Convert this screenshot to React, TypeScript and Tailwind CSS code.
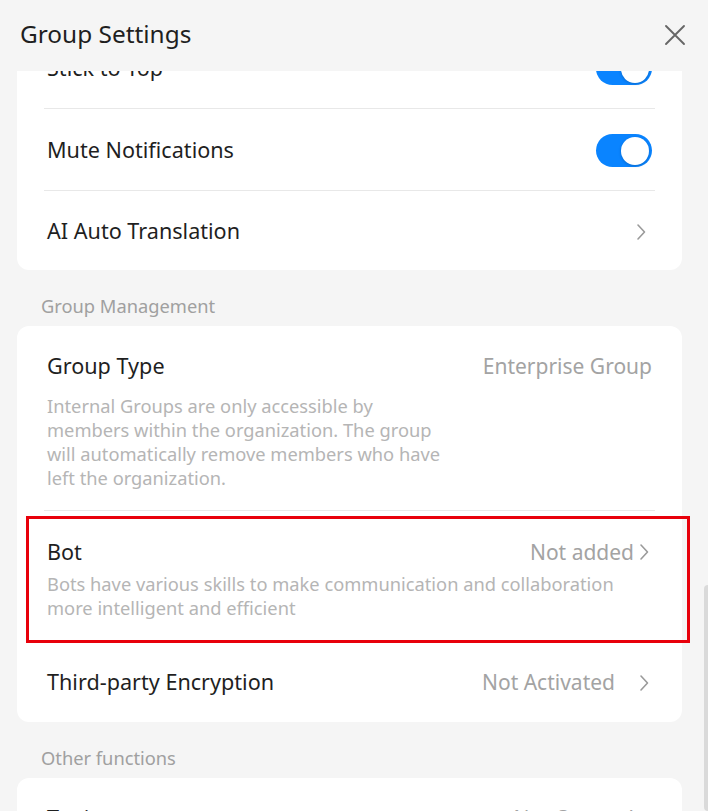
import React from "react";

const font = { fontFamily: '"Noto Sans", "Liberation Sans", sans-serif' };

function Chevron() {
  return (
    <svg width="10" height="18" viewBox="0 0 10 18" className="shrink-0">
      <polyline points="2,2 8.5,9 2,16" fill="none" stroke="#9a9a9a" strokeWidth="1.6" strokeLinecap="round" strokeLinejoin="round" />
    </svg>
  );
}

function Toggle() {
  return (
    <div className="w-[56px] h-[33px] rounded-full bg-[#0a84ff] relative shrink-0">
      <div className="absolute right-[3px] top-[2.5px] w-[28px] h-[28px] rounded-full bg-white shadow-[0_1px_3px_rgba(0,0,0,0.2)]" />
    </div>
  );
}

function Divider() {
  return <div className="mx-[27px] h-px bg-[#e8e8e8]" />;
}

function Row({ title, h, pr, children }: { title: string; h: string; pr: string; children?: React.ReactNode }) {
  return (
    <div className={`${h} ${pr} pl-[30px] pt-[2px] flex items-center justify-between`}>
      <span className="text-[21.6px] text-[#1f1f1f]">{title}</span>
      <div className="flex items-center gap-[14px]">{children}</div>
    </div>
  );
}

function SectionLabel({ text }: { text: string }) {
  return <div className="px-[41px] mt-[24px] mb-[8px] text-[18.3px] leading-[24px] text-[#a0a0a0]">{text}</div>;
}

export default function App() {
  return (
    <div className="w-[708px] h-[811px] bg-[#f5f5f5] flex flex-col overflow-hidden relative" style={font}>
      <div className="h-[71px] shrink-0 flex items-center justify-between pl-[20px] pr-[22px] pb-[2px]">
        <span className="text-[24.4px] text-[#1f1f1f]">Group Settings</span>
        <svg width="22" height="22" viewBox="0 0 22 22">
          <path d="M2 2 L20 20 M20 2 L2 20" stroke="#666" strokeWidth="1.9" strokeLinecap="round" />
        </svg>
      </div>

      <div className="flex-1 overflow-hidden">
        <div className="-mt-[44px]">
          <div className="ml-[17px] mr-[26px] bg-white rounded-[12px]">
            <Row title="Stick to Top" h="h-[81px]" pr="pr-[30px]"><Toggle /></Row>
            <Divider />
            <Row title="Mute Notifications" h="h-[81px]" pr="pr-[30px]"><Toggle /></Row>
            <Divider />
            <Row title="AI Auto Translation" h="h-[79px]" pr="pr-[36px]"><Chevron /></Row>
          </div>

          <SectionLabel text="Group Management" />
          <div className="ml-[17px] mr-[26px] bg-white rounded-[12px]">
            <div className="pt-[28px] pb-[20px] pl-[30px] pr-[30px]">
              <div className="flex items-center justify-between leading-[24px]">
                <span className="text-[21.6px] text-[#1f1f1f]">Group Type</span>
                <span className="text-[21px] text-[#a3a3a3]">Enterprise Group</span>
              </div>
              <p className="mt-[16px] w-[410px] text-[18.3px] leading-[24px] text-[#b5b5b5]">
                Internal Groups are only accessible by members within the organization. The group will automatically remove members who have left the organization.
              </p>
            </div>
            <Divider />
            <div className="relative pt-[29px] pb-[22px] pl-[30px] pr-[33px]">
              <div className="flex items-center justify-between leading-[24px]">
                <span className="text-[21.6px] text-[#1f1f1f]">Bot</span>
                <div className="flex items-center gap-[5px]">
                  <span className="text-[21px] text-[#a3a3a3]">Not added</span>
                  <Chevron />
                </div>
              </div>
              <p className="mt-[8px] text-[18.3px] leading-[24px] text-[#b5b5b5]">
                Bots have various skills to make communication and collaboration more intelligent and efficient
              </p>
              <div className="absolute left-[9px] -right-[8px] top-[5px] -bottom-[1px] border-[3px] border-[#e8000b] pointer-events-none" />
            </div>
            <Divider />
            <div className="h-[79px] pl-[30px] pr-[33px] flex items-center justify-between">
              <span className="text-[21.6px] text-[#1f1f1f]">Third-party Encryption</span>
              <div className="flex items-center gap-[24px]">
                <span className="text-[21px] text-[#a3a3a3]">Not Activated</span>
                <Chevron />
              </div>
            </div>
          </div>

          <SectionLabel text="Other functions" />
          <div className="ml-[17px] mr-[26px] bg-white rounded-[12px]">
            <div className="h-[81px] pl-[30px] pr-[33px] flex items-center justify-between">
              <span className="text-[21.6px] text-[#1f1f1f]">Topic</span>
              <div className="flex items-center gap-[5px]">
                <span className="text-[21px] text-[#a3a3a3]">Not Opened</span>
                <Chevron />
              </div>
            </div>
          </div>
        </div>
      </div>

      <div className="absolute right-0 top-[585px] w-[4px] h-[226px] bg-[#dadada] rounded-l-sm" />
    </div>
  );
}
